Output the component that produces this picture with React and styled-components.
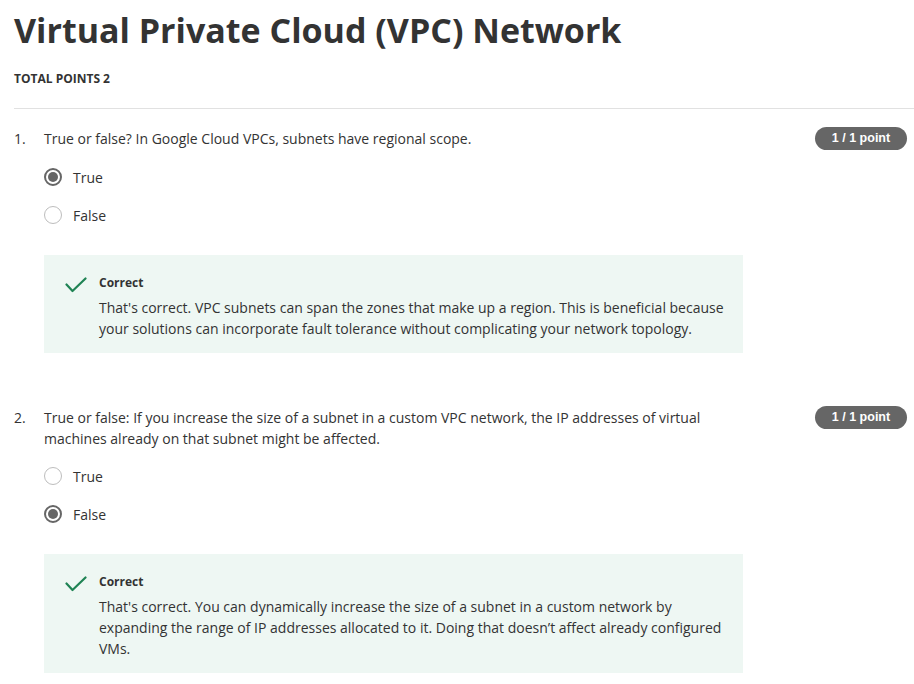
import React from "react"
import styled, { createGlobalStyle } from "styled-components"

const GlobalStyle = createGlobalStyle`
  body {
    margin: 0;
    background: #fff;
    font-family: "Open Sans", "Liberation Sans", sans-serif;
    color: #333;
  }
`

const questions = [
  {
    id: 1,
    text: "True or false? In Google Cloud VPCs, subnets have regional scope.",
    options: ["True", "False"],
    selected: 0,
    points: "1 / 1 point",
    feedback:
      "That's correct. VPC subnets can span the zones that make up a region. This is beneficial because your solutions can incorporate fault tolerance without complicating your network topology.",
  },
  {
    id: 2,
    text: "True or false: If you increase the size of a subnet in a custom VPC network, the IP addresses of virtual machines already on that subnet might be affected.",
    options: ["True", "False"],
    selected: 1,
    points: "1 / 1 point",
    feedback:
      "That's correct. You can dynamically increase the size of a subnet in a custom network by expanding the range of IP addresses allocated to it. Doing that doesn’t affect already configured VMs.",
  },
]

const CheckIcon = () => (
  <svg width='22' height='16' viewBox='0 0 22 16' fill='none'>
    <polyline
      points='1.5,7.5 7.5,14 20.5,1.5'
      stroke='#1f8354'
      strokeWidth='2.2'
      strokeLinecap='round'
      strokeLinejoin='round'
    />
  </svg>
)

export default function App() {
  return (
    <Page>
      <GlobalStyle />
      <Title>Virtual Private Cloud (VPC) Network</Title>
      <TotalPoints>TOTAL POINTS 2</TotalPoints>
      <Divider />
      {questions.map((q) => (
        <Question key={q.id}>
          <QuestionRow>
            <Number>{q.id}.</Number>
            <QuestionText>{q.text}</QuestionText>
            <Badge>{q.points}</Badge>
          </QuestionRow>
          <Options>
            {q.options.map((opt, i) => (
              <Option key={opt}>
                <Radio $checked={i === q.selected} />
                <span>{opt}</span>
              </Option>
            ))}
          </Options>
          <Feedback>
            <IconWrap>
              <CheckIcon />
            </IconWrap>
            <FeedbackBody>
              <FeedbackTitle>Correct</FeedbackTitle>
              <FeedbackText>{q.feedback}</FeedbackText>
            </FeedbackBody>
          </Feedback>
        </Question>
      ))}
    </Page>
  )
}

const Page = styled.div`
  padding: 8px 0 0 14px;
`

const Title = styled.h1`
  margin: 0;
  font-size: 34px;
  line-height: 44px;
  font-weight: 700;
  color: #333;
`

const TotalPoints = styled.div`
  margin-top: 19px;
  font-size: 12px;
  line-height: 16px;
  font-weight: 700;
  color: #333;
`

const Divider = styled.hr`
  margin: 21px 0 19px;
  border: none;
  border-top: 1px solid #e1e1e1;
`

const Question = styled.section`
  padding-right: 7px;
  margin-bottom: 54px;
`

const QuestionRow = styled.div`
  display: grid;
  grid-template-columns: 30px 1fr auto;
  align-items: start;
  font-size: 14px;
  line-height: 21px;
`

const Number = styled.span``

const QuestionText = styled.p`
  margin: 0;
  max-width: 680px;
`

const Badge = styled.span`
  margin-top: -1px;
  width: 92px;
  height: 23px;
  border-radius: 12px;
  background: #666;
  color: #fff;
  font-family: "Liberation Sans", Arial, sans-serif;
  font-size: 12.5px;
  font-weight: 700;
  display: flex;
  align-items: center;
  justify-content: center;
`

const Options = styled.div`
  margin: 8px 0 0 30px;
  display: flex;
  flex-direction: column;
`

const Option = styled.label`
  height: 38px;
  display: flex;
  align-items: center;
  gap: 11px;
  font-size: 14px;
  color: #333;
`

const Radio = styled.span`
  box-sizing: border-box;
  width: 18px;
  height: 18px;
  border-radius: 50%;
  border: ${(p) => (p.$checked ? "2px solid #666" : "1.5px solid #bdbdbd")};
  display: flex;
  align-items: center;
  justify-content: center;
  &::after {
    content: "";
    display: ${(p) => (p.$checked ? "block" : "none")};
    width: 10px;
    height: 10px;
    border-radius: 50%;
    background: #666;
  }
`

const Feedback = styled.div`
  margin: 21px 0 0 30px;
  width: 699px;
  box-sizing: border-box;
  background: #eef7f3;
  padding: 20px 18px 14px 21px;
  display: flex;
  gap: 12px;
`

const IconWrap = styled.div`
  width: 22px;
  flex-shrink: 0;
  padding-top: 1px;
`

const FeedbackBody = styled.div`
  display: flex;
  flex-direction: column;
  gap: 6px;
`

const FeedbackTitle = styled.div`
  font-size: 12px;
  line-height: 16px;
  font-weight: 700;
  color: #333;
`

const FeedbackText = styled.p`
  margin: 0;
  font-size: 14px;
  line-height: 21px;
  color: #333;
`
